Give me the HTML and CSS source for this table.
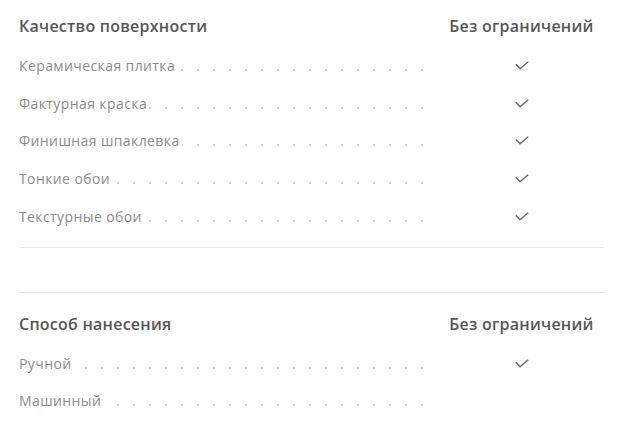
FILE: index.html
```html
<!DOCTYPE html>
<html lang="ru">
<head>
<meta charset="utf-8">
<link rel="stylesheet" href="styles.css">
</head>
<body>
<div class="spec">
  <section class="group group-first">
    <div class="head">
      <div class="head-title">Качество поверхности</div>
      <div class="head-value">Без ограничений</div>
    </div>
    <div class="row"><div class="leader"><span class="label">Керамическая плитка</span></div><div class="value"><svg class="check" viewBox="0 0 14 10" width="14" height="10"><path d="M0.8 3.2 L5 7.8 L13.2 0.8"/></svg></div></div>
    <div class="row"><div class="leader"><span class="label">Фактурная краска</span></div><div class="value"><svg class="check" viewBox="0 0 14 10" width="14" height="10"><path d="M0.8 3.2 L5 7.8 L13.2 0.8"/></svg></div></div>
    <div class="row"><div class="leader"><span class="label">Финишная шпаклевка</span></div><div class="value"><svg class="check" viewBox="0 0 14 10" width="14" height="10"><path d="M0.8 3.2 L5 7.8 L13.2 0.8"/></svg></div></div>
    <div class="row"><div class="leader"><span class="label">Тонкие обои</span></div><div class="value"><svg class="check" viewBox="0 0 14 10" width="14" height="10"><path d="M0.8 3.2 L5 7.8 L13.2 0.8"/></svg></div></div>
    <div class="row"><div class="leader"><span class="label">Текстурные обои</span></div><div class="value"><svg class="check" viewBox="0 0 14 10" width="14" height="10"><path d="M0.8 3.2 L5 7.8 L13.2 0.8"/></svg></div></div>
  </section>
  <section class="group group-second">
    <div class="head">
      <div class="head-title">Способ нанесения</div>
      <div class="head-value">Без ограничений</div>
    </div>
    <div class="row"><div class="leader"><span class="label">Ручной</span></div><div class="value"><svg class="check" viewBox="0 0 14 10" width="14" height="10"><path d="M0.8 3.2 L5 7.8 L13.2 0.8"/></svg></div></div>
    <div class="row"><div class="leader"><span class="label">Машинный</span></div><div class="value"></div></div>
  </section>
</div>
</body>
</html>
```

FILE: styles.css
```css
html, body {
  margin: 0;
  padding: 0;
  background: #fff;
}
body {
  font-family: "Open Sans", "Noto Sans", sans-serif;
  color: #555;
}
.spec {
  width: 585px;
  padding-left: 19px;
}
.group {
  display: flex;
  flex-direction: column;
}
.group-first {
  padding: 16px 0 11px;
  border-bottom: 1px solid #e8e8e8;
}
.group-second {
  margin-top: 44px;
  border-top: 1px solid #e8e8e8;
  padding-top: 21px;
}
.head {
  display: grid;
  grid-template-columns: 1fr 165px;
  height: 20px;
  line-height: 20px;
  margin-bottom: 11px;
  font-size: 16px;
  font-weight: 600;
  letter-spacing: 0.25px;
  color: #565656;
}
.head-value {
  text-align: center;
}
.row {
  display: grid;
  grid-template-columns: 1fr 165px;
  height: 37.75px;
  align-items: center;
}
.leader {
  margin-right: 14px;
  height: 18px;
  line-height: 18px;
  background-image: radial-gradient(circle, #d0d0d0 0.9px, transparent 1.2px);
  background-size: 16px 4px;
  background-position: -5px 11px;
  background-repeat: repeat-x;
  font-size: 14px;
  letter-spacing: 0.4px;
}
.label {
  background: #fff;
  color: #8b8b8b;
  padding-right: 2px;
}
.value {
  display: flex;
  justify-content: center;
  align-items: center;
}
.check {
  display: block;
  fill: none;
  stroke: #6a6a6a;
  stroke-width: 1.5;
}
```
